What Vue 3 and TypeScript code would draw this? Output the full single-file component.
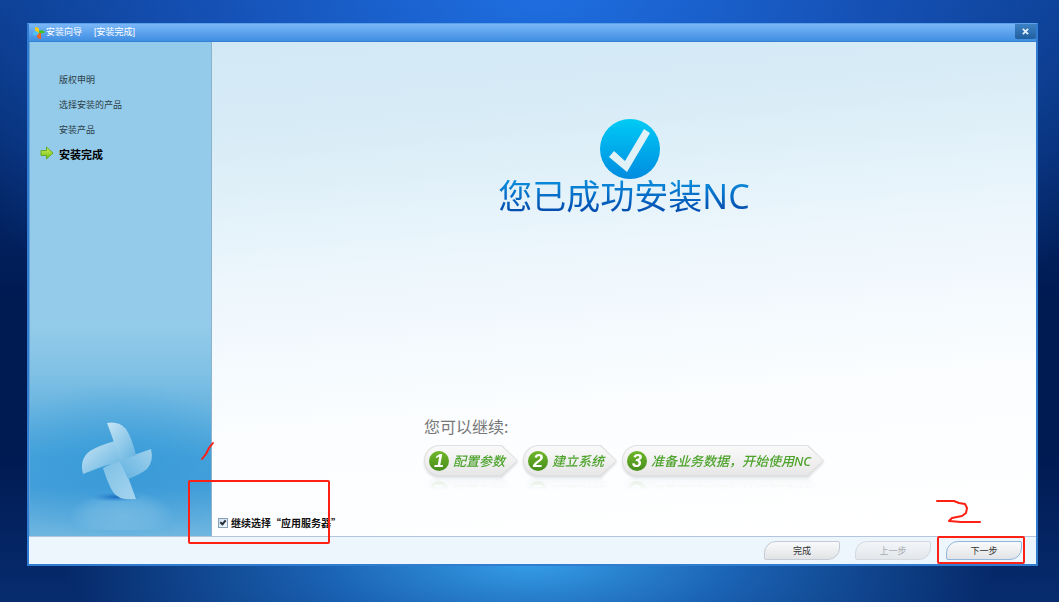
<script setup lang="ts">
import { ref } from 'vue'

interface WizardStep {
  label: string
  current: boolean
}

const steps: WizardStep[] = [
  { label: '版权申明', current: false },
  { label: '选择安装的产品', current: false },
  { label: '安装产品', current: false },
  { label: '安装完成', current: true },
]

const nextActions: string[] = ['配置参数', '建立系统', '准备业务数据，开始使用NC']

const continueSelected = ref(true)
</script>

<template>
  <div class="desktop">
    <section class="window">
      <header class="titlebar">
        <svg class="logo" viewBox="0 0 12 12" aria-hidden="true">
          <path d="M2 0Q6 0 6 3V6H4Q2 5 2 0Z" fill="#f8cb10" />
          <path d="M6 6V4Q10 2 12 5Q11 7 6 6Z" fill="#3fc42a" />
          <path d="M5 6H8V12Q4 12 4 9Z" fill="#f0641e" />
          <path d="M6 6Q5 9 0 8Q0 4 2 4Q4 4 6 6Z" fill="#4fc0fa" />
        </svg>
        <span>安装向导</span>
        <span class="subtitle">[安装完成]</span>
        <button class="close" type="button" aria-label="关闭">
          <svg viewBox="0 0 8 8"><path d="M1 1L7 7M7 1L1 7" stroke="#e6f2fc" stroke-width="2" /></svg>
        </button>
      </header>

      <div class="body">
        <aside class="sidebar">
          <ol class="steps">
            <li v-for="step in steps" :key="step.label" :class="{ current: step.current }">
              <svg v-if="step.current" class="arrow" viewBox="0 0 14 14" aria-hidden="true">
                <defs>
                  <linearGradient id="arrowFill" x1="0" y1="0" x2="0" y2="1">
                    <stop offset="0" stop-color="#d2f35c" />
                    <stop offset="1" stop-color="#6fbd15" />
                  </linearGradient>
                </defs>
                <path d="M1 4.5H6.5V1L13 7L6.5 13V9.5H1Z" fill="url(#arrowFill)" stroke="#65a92b" stroke-linejoin="round" />
              </svg>
              {{ step.label }}
            </li>
          </ol>
          <svg class="pinwheel" viewBox="0 0 110 116" aria-hidden="true">
            <defs>
              <linearGradient id="blade" x1="0" y1="0" x2="1" y2="1">
                <stop offset="0" stop-color="#c8e5f5" />
                <stop offset="1" stop-color="#62b2e0" />
              </linearGradient>
              <linearGradient id="bladeLow" x1="0" y1="0" x2="1" y2="1">
                <stop offset="0" stop-color="#7cc0e6" />
                <stop offset="1" stop-color="#a6d4ee" />
              </linearGradient>
              <linearGradient id="bladeSide" x1="1" y1="0" x2="0" y2="1">
                <stop offset="0" stop-color="#9fd0ed" />
                <stop offset="1" stop-color="#62b2e0" />
              </linearGradient>
              <radialGradient id="shade">
                <stop offset="0" stop-color="#1565bd" stop-opacity=".9" />
                <stop offset="1" stop-color="#2888d2" stop-opacity="0" />
              </radialGradient>
              <radialGradient id="floor">
                <stop offset="0" stop-color="#86c4e8" stop-opacity=".6" />
                <stop offset=".6" stop-color="#86c4e8" stop-opacity=".4" />
                <stop offset="1" stop-color="#86c4e8" stop-opacity="0" />
              </radialGradient>
            </defs>
            <ellipse cx="52" cy="101" rx="53" ry="24" fill="url(#floor)" />
            <ellipse cx="46" cy="83" rx="26" ry="5" fill="url(#shade)" />
            <path d="M51 45L33 54Q38 70 43 78Q49 87 66 85Q59 65 51 45Z" fill="url(#bladeLow)" />
            <path d="M49 46Q67 40 81 35Q84 47 77 55Q71 60 58 65Z" fill="url(#bladeSide)" />
            <path d="M51 47L45 27Q30 31 20 37Q9 45 13 60Q32 52 51 47Z" fill="url(#blade)" />
            <path d="M50 47Q45 30 37 9Q49 7 56 15Q62 24 66 41Z" fill="url(#blade)" />
          </svg>
        </aside>

        <main class="content">
          <div class="hero">
            <svg class="tick" viewBox="0 0 72 60" aria-hidden="true">
              <defs>
                <linearGradient id="disc" x1="0" y1="0" x2="0" y2="1">
                  <stop offset="0" stop-color="#00cbf5" />
                  <stop offset="1" stop-color="#008be0" />
                </linearGradient>
              </defs>
              <circle cx="42" cy="30" r="30" fill="url(#disc)" />
              <path d="M21 38L26 32L37 42L56 10L62 14L39 53Z" fill="#e1f1f8" />
            </svg>
            <h1>您已成功安装NC</h1>
          </div>

          <div class="continue">
            <p>您可以继续:</p>
            <ol class="chips">
              <li v-for="(action, index) in nextActions" :key="action">
                <span class="chip">
                  <span class="number">{{ index + 1 }}</span>
                  <span class="chip-label">{{ action }}</span>
                </span>
              </li>
            </ol>
          </div>

          <div class="option">
            <label>
              <input v-model="continueSelected" type="checkbox" />
              <span>继续选择“应用服务器”</span>
            </label>
            <svg class="mark-one" viewBox="0 0 144 106" aria-hidden="true">
              <g fill="none" stroke="#fc2015" stroke-width="2" stroke-linecap="round">
                <rect x="2" y="41" width="140" height="62" rx="1" />
                <path d="M15 19L19 14L22 8L26 3" />
              </g>
            </svg>
          </div>
        </main>
      </div>

      <footer class="footer">
        <button type="button">完成</button>
        <button type="button" disabled>上一步</button>
        <div class="next">
          <button class="primary" type="button">下一步</button>
          <svg class="mark-two" viewBox="0 0 90 66" aria-hidden="true">
            <g fill="none" stroke="#fc2015" stroke-width="2" stroke-linecap="round" stroke-linejoin="round">
              <rect x="2" y="38" width="86" height="26" rx="1" />
              <path d="M1 2H18L23 4L29 5L31 9L30 14L26 17L16 19L13 22L25 23H44" />
            </g>
          </svg>
        </div>
      </footer>
    </section>
  </div>
</template>

<style>
body {
  margin: 0;
}
</style>

<style scoped>
.desktop {
  box-sizing: border-box;
  display: flex;
  min-height: 100vh;
  padding: 23px 21px 36px 27px;
  font-family: "Liberation Sans", "Noto Sans CJK SC", sans-serif;
  background:
    radial-gradient(ellipse 44% 26% at 50% 93%, #369fe8 0%, rgba(30, 108, 192, .85) 45%, transparent 100%),
    radial-gradient(ellipse 62% 75% at 51% -4%, #1f70e4 0%, #1551b5 50%, transparent 100%),
    linear-gradient(#0a3a88 0%, #001a52 50%, #001a52 75%, #072c6e 100%);
}

.window {
  box-sizing: border-box;
  display: flex;
  flex: 1;
  flex-direction: column;
  min-width: 0;
  border: 2px solid #2f7cd0;
  border-top: 1px solid #5ba1ea;
  background: #edf5fd;
}

.titlebar {
  display: flex;
  align-items: center;
  height: 17px;
  padding-left: 4px;
  border-bottom: 1px solid #3581d2;
  color: #fff;
  font-size: 9px;
  line-height: 17px;
  background: linear-gradient(#7ab7f8, #3f8ee2);
}

.logo {
  width: 12px;
  height: 12px;
  margin-right: 1px;
}

.subtitle {
  margin-left: 12px;
}

.close {
  display: flex;
  align-items: center;
  justify-content: center;
  align-self: flex-start;
  width: 21px;
  height: 15px;
  margin-left: auto;
  padding: 0;
  border: 0;
  border-radius: 0 0 2px 2px;
  background: linear-gradient(#3c82c4, #215f9f);
}

.close svg {
  width: 7px;
  height: 7px;
}

.body {
  display: flex;
  flex: 1;
  border-bottom: 1px solid #b3c6de;
}

.sidebar {
  box-sizing: border-box;
  display: flex;
  flex: 0 0 183px;
  flex-direction: column;
  justify-content: space-between;
  border-right: 1px solid #8fb2cb;
  border-left: 1px solid #64a5dc;
  background:
    radial-gradient(ellipse 130px 80px at 50% 85%, rgba(40, 148, 214, .5), transparent),
    linear-gradient(#94cbea 0%, #94cbea 57%, #80c1e5 67%, #66b3e0 75%, #46a2da 84%, #469fd9 90%, #6eb6e0 100%);
}

.steps {
  margin: 0;
  padding: 26px 0 0 29px;
  list-style: none;
}

.steps li {
  position: relative;
  height: 25px;
  color: #2c3e48;
  font-size: 9px;
  line-height: 25px;
}

.steps li.current {
  color: #000;
  font-size: 11px;
  font-weight: 700;
}

.arrow {
  position: absolute;
  top: 3px;
  left: -19px;
  width: 14px;
  height: 14px;
}

.pinwheel {
  align-self: center;
  width: 110px;
  height: 116px;
  margin-bottom: 6px;
  margin-left: 8px;
}

.content {
  display: flex;
  flex: 1;
  flex-direction: column;
  min-width: 0;
  background: linear-gradient(175deg, #d2e9f5 0%, #d6ebf6 15%, #ecf6fc 42%, #fbfdff 70%, #fff 100%);
}

.hero {
  display: flex;
  flex-direction: column;
  align-items: center;
  padding-top: 77px;
}

.tick {
  width: 72px;
  height: 60px;
}

h1 {
  margin: 0;
  color: transparent;
  font-family: "Noto Sans", "Noto Sans CJK SC", sans-serif;
  font-size: 34px;
  font-weight: 400;
  line-height: 34px;
  background: linear-gradient(#0a90df, #0349ac);
  background-clip: text;
}

.continue {
  align-self: center;
  margin-top: auto;
}

.continue p {
  margin: 0 0 9px;
  color: #777;
  font-family: "Noto Sans CJK SC", sans-serif;
  font-size: 16px;
  line-height: 20px;
}

.chips {
  display: flex;
  gap: 5px;
  margin: 0;
  padding: 0;
  list-style: none;
  filter: drop-shadow(0 2px 1px rgba(0, 0, 0, .12));
}

.chips li {
  -webkit-box-reflect: below 0 linear-gradient(transparent 55%, rgba(0, 0, 0, .16));
}

.chip,
.chip::before {
  border-radius: 16px 0 0 16px;
  clip-path: polygon(0 0, calc(100% - 16px) 0, 100% 50%, calc(100% - 16px) 100%, 0 100%);
}

.chip {
  position: relative;
  display: flex;
  align-items: center;
  gap: 4px;
  height: 31px;
  padding: 0 13px 0 5px;
  background: #dfdfdf;
}

.chip::before {
  position: absolute;
  inset: 1px;
  content: "";
  background: linear-gradient(#fafafa, #e7e7e7);
}

.number {
  position: relative;
  width: 20px;
  height: 20px;
  border-radius: 50%;
  color: #fff;
  font-size: 18px;
  font-style: italic;
  font-weight: 700;
  line-height: 20px;
  text-align: center;
  background: linear-gradient(#70b72b, #468d1b);
}

.chip-label {
  position: relative;
  color: #4da32c;
  font-family: "Noto Sans", "Noto Sans CJK SC", sans-serif;
  font-size: 13px;
  font-style: italic;
  font-weight: 500;
  line-height: 20px;
  white-space: nowrap;
}

.option {
  position: relative;
  margin-top: 40px;
  padding: 0 0 6px 6px;
}

.option label {
  display: flex;
  align-items: center;
  gap: 3px;
  height: 14px;
  color: #111;
  font-family: "Noto Sans CJK SC", sans-serif;
  font-size: 10px;
  font-weight: 700;
  line-height: 14px;
}

.option input {
  box-sizing: border-box;
  width: 10px;
  height: 10px;
  margin: 0;
  border: 1px solid #8aa2b8;
  appearance: none;
  background: linear-gradient(135deg, #cbdcec, #f5f9fd);
}

.option input:checked {
  position: relative;
}

.option input:checked::after {
  position: absolute;
  top: 0;
  left: 2px;
  width: 2px;
  height: 4px;
  border: solid #26313c;
  border-width: 0 2px 2px 0;
  content: "";
  transform: rotate(40deg);
}

.mark-one {
  position: absolute;
  bottom: -10px;
  left: -25px;
  width: 144px;
  height: 106px;
  pointer-events: none;
}

.footer {
  display: flex;
  justify-content: flex-end;
  gap: 15px;
  padding: 4px 14px 4px 0;
}

.footer button {
  box-sizing: border-box;
  width: 76px;
  height: 19px;
  padding: 0;
  border: 1px solid #c5cbd2;
  border-radius: 12px 2px 12px 2px;
  color: #333;
  font-family: "Noto Sans CJK SC", sans-serif;
  font-size: 9px;
  line-height: 17px;
  background: linear-gradient(#f9fafb, #e1e3e6);
}

.footer button:disabled {
  border-color: #d3d9df;
  color: #a8adb2;
  background: linear-gradient(#f2f5f8, #e3e7eb);
}

.footer button.primary {
  display: block;
  border-color: #8fb7de;
}

.next {
  position: relative;
}

.mark-two {
  position: absolute;
  top: -42px;
  left: -10px;
  width: 90px;
  height: 66px;
  pointer-events: none;
}
</style>
